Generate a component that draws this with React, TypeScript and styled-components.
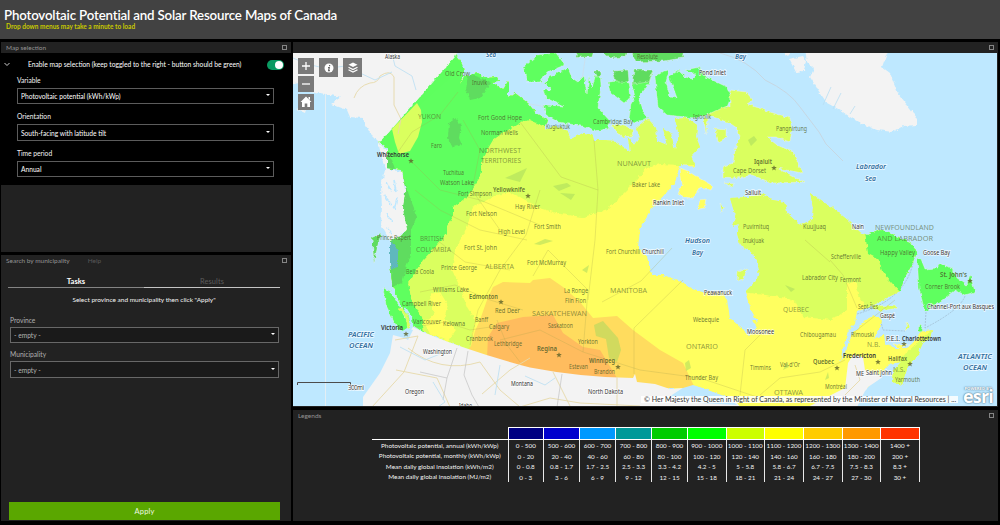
import React from 'react';
import styled, { createGlobalStyle } from 'styled-components';

const Global = createGlobalStyle`
  * { box-sizing: border-box; }
  body { margin: 0; background: #000; overflow: hidden; }
  #root { font-family: Lato, "Open Sans", sans-serif; }
`;

const Page = styled.div`
  width: 1000px;
  height: 525px;
  display: grid;
  grid-template-rows: 39px 479px 1fr;
  row-gap: 3px;
  background: #000;
  overflow: hidden;
`;

const Header = styled.header`
  background: #424242;
  padding: 7px 4px 0;
  white-space: nowrap;
`;

const Title = styled.h1`
  margin: 0;
  font-size: 13.3px;
  line-height: 16px;
  font-weight: 600;
  color: #fff;
  letter-spacing: -0.17px;
`;

const Subtitle = styled.div`
  padding-left: 2px;
  font-size: 6.5px;
  line-height: 8px;
  font-weight: 700;
  color: #c8c800;
`;

const Main = styled.main`
  display: grid;
  grid-template-columns: 290px 705px;
  column-gap: 2px;
  padding-left: 1px;
`;

const Column = styled.div<{ $rows: string }>`
  display: grid;
  grid-template-rows: ${(p) => p.$rows};
  row-gap: 3px;
  min-width: 0;
`;

const Panel = styled.section`
  display: flex;
  flex-direction: column;
  background: #222;
  min-width: 0;
  min-height: 0;
`;

const PanelBar = styled.div`
  flex: none;
  height: 11px;
  display: flex;
  align-items: center;
  padding: 0 4px 0 5px;
  font-size: 6.5px;
  color: #949494;
  white-space: nowrap;
`;

const Dim = styled.span`
  margin-left: 18px;
  color: #585858;
`;

const Maximize = styled.span`
  margin-left: auto;
  width: 5px;
  height: 5px;
  border: 1px solid #858585;
`;

const Form = styled.div`
  height: 132px;
  flex: none;
  background: #000;
  padding: 4px 7px 0 3px;
`;

const ToggleRow = styled.div`
  display: flex;
  align-items: center;
  height: 14px;
  font-size: 6.7px;
  color: #fff;
  white-space: nowrap;
`;

const ToggleText = styled.span`
  margin-left: 18px;
`;

const Toggle = styled.span`
  margin-left: auto;
  margin-top: 2px;
  width: 17px;
  height: 10px;
  border-radius: 5px;
  background: #0a9a62;
  display: flex;
  justify-content: flex-end;
  padding: 1px;
  &::after {
    content: '';
    width: 8px;
    height: 8px;
    border-radius: 50%;
    background: #fff;
  }
`;

const Fields = styled.div`
  padding: 0 10px 0 13px;
`;

const Label = styled.div<{ $dim?: boolean; $h: number }>`
  height: ${(p) => p.$h}px;
  display: flex;
  align-items: flex-end;
  padding-bottom: ${(p) => (p.$dim ? 2 : 3)}px;
  line-height: 9px;
  font-size: 6.7px;
  color: ${(p) => (p.$dim ? '#b0b0b0' : '#f4f4f4')};
`;

const Select = styled.div<{ $dim?: boolean }>`
  height: 16.4px;
  display: flex;
  align-items: center;
  padding: 0 3px;
  border: 1px solid ${(p) => (p.$dim ? '#686868' : '#5c5c5c')};
  background: ${(p) => (p.$dim ? '#1a1a1a' : '#000')};
  color: ${(p) => (p.$dim ? '#b4b4b4' : '#fff')};
  font-size: 6.65px;
  &::after {
    content: '';
    margin: -2px 0 0 auto;
    border: 2px solid transparent;
    border-top-color: #fff;
    border-bottom: 0;
  }
`;

const Search = styled.div`
  flex: 1;
  display: flex;
  flex-direction: column;
  padding: 7px 11px 0 7px;
`;

const Tabs = styled.div`
  display: grid;
  grid-template-columns: 1fr 1fr;
`;

const Tab = styled.div<{ $on?: boolean }>`
  height: 15px;
  line-height: 17px;
  text-align: center;
  border-bottom: 1px solid ${(p) => (p.$on ? '#848484' : '#c4c4c4')};
  font-size: ${(p) => (p.$on ? 7.6 : 7.4)}px;
  font-weight: ${(p) => (p.$on ? 700 : 400)};
  color: ${(p) => (p.$on ? '#fff' : '#5c5c5c')};
  letter-spacing: ${(p) => (p.$on ? 0 : 0.1)}px;
`;

const Hint = styled.p`
  margin: 0;
  height: 23px;
  line-height: 23px;
  text-align: center;
  font-size: 6.5px;
  color: #f4f4f4;
`;

const SearchFields = styled.div`
  padding: 0 1px 0 2px;
`;

const Apply = styled.button`
  margin: auto 0 1px 1px;
  height: 18px;
  flex: none;
  border: 0;
  background: #5aa700;
  color: #eef8e0;
  font: 7.5px Lato, sans-serif;
  letter-spacing: 0.15px;
`;

const MapFrame = styled.div`
  position: relative;
  height: 353px;
  overflow: hidden;
`;

const MapSvg = styled.svg`
  display: block;
  width: 704px;
  height: 353px;
`;

const Controls = styled.div`
  position: absolute;
  left: 5px;
  top: 5px;
  display: flex;
  gap: 5px;
`;

const Stack = styled.div`
  display: flex;
  flex-direction: column;
  gap: 2px;
`;

const Tool = styled.button<{ $s: number }>`
  width: ${(p) => p.$s}px;
  height: ${(p) => p.$s}px;
  padding: 0;
  border: 0;
  background: #7a7a7a;
  display: grid;
  place-items: center;
`;

const Attribution = styled.div`
  position: absolute;
  left: 348px;
  bottom: 3px;
  width: 317px;
  height: 7px;
  padding-left: 3px;
  background: rgba(255, 255, 255, 0.85);
  font-size: 7px;
  line-height: 7px;
  letter-spacing: 0.025px;
  color: #333;
  white-space: nowrap;
`;

const Powered = styled.div`
  position: absolute;
  right: 4px;
  bottom: 4px;
  width: 32px;
  color: #fff;
  font: 700 18px/11px "Open Sans", sans-serif;
  letter-spacing: -0.8px;
  text-shadow: 0 0 2px #55798e, 0 0 1px #55798e;
  text-align: center;
`;

const PoweredTop = styled.div`
  font-size: 4.2px;
  line-height: 5px;
  letter-spacing: 0;
`;

const LegendTable = styled.table`
  margin: 6px 0 0 79px;
  width: 548px;
  border-collapse: collapse;
  table-layout: fixed;
  color: #f4f4f4;
  font-size: 6.3px;
  text-align: center;
  white-space: nowrap;
`;

const Swatch = styled.th<{ $c: string }>`
  height: 12px;
  padding: 0;
  border: 1px solid #fff;
  background: ${(p) => p.$c};
`;

const Corner = styled.th`
  padding: 0;
  border-bottom: 1px solid #fff;
`;

const RowName = styled.td`
  padding: 0;
  font-size: 6.4px;
`;

const Cell = styled.td`
  padding: 1px 0 0;
  height: 10.7px;
  line-height: 9px;
  border-left: 1px solid #e8e8e8;
  border-right: 1px solid #e8e8e8;
`;

const FooterLine = styled.div`
  margin: 2px 0 0 262px;
  background: #3c3c3c;
  height: 1px;
`;

const LAND = '#f3f3f3';
const SEA = '#bee8ff';
const GREEN = '#5eff5e';
const DKGREEN = '#5edc5e';
const LIME = '#daff5e';
const YELLOW = '#ffff5e';
const AMBER = '#ffdc5e';
const ORANGE = '#ffbc5e';

const MAINLAND =
  '455,54 462,63 464,72 460,84 465,76 478,73 486,78 497,77 499,81 492,82 503,90 508,81 508,98 515,93 523,99 520,97 528,103 535,112 548,120 545,130 555,126 568,131 571,139 583,133 592,134 594,140 603,140 615,141 630,152 628,137 634,145 640,137 636,129 648,119 656,128 657,141 667,145 663,128 671,134 675,150 679,135 675,119 687,118 697,125 696,137 700,147 691,157 696,167 680,165 677,175 675,183 667,192 652,208 643,222 640,230 638,247 647,257 652,275 663,275 683,282 687,286 702,292 723,292 727,300 730,318 740,327 750,336 757,327 753,320 758,322 751,310 745,292 757,280 759,270 757,260 750,251 740,245 737,233 738,224 733,226 736,218 730,198 750,197 760,193 772,200 785,202 787,213 800,225 812,220 813,207 810,192 820,200 833,208 850,222 856,230 867,235 880,229 893,235 910,242 917,252 913,263 905,277 900,291 883,300 868,308 857,311 855,324 848,331 843,348 840,362 845,352 852,334 866,320 874,316 882,319 880,330 873,339 884,334 885,343 895,348 907,348 916,340 920,332 932,330 930,338 923,343 916,358 908,366 902,385 892,382 893,371 901,362 890,364 880,374 873,382 860,395 850,407 740,407 727,397 693,385 683,388 670,388 640,383 633,378 583,376 553,372 520,365 490,357 470,350 423,332 410,323 403,310 397,297 392,283 390,260 390,241 400,237 407,230 405,222 402,207 406,190 402,170 387,168 387,148 378,142';

const ISLES: [string, string][] = [
  ['523,67 530,61 537,55 556,53 565,65 547,72 540,82 527,82', GREEN],
  ['550,77 568,68 572,78 578,82 584,76 587,94 589,76 592,88 597,70 600,72 601,86 598,108 610,121 608,129 593,131 587,127 558,122 546,115 543,105 563,106 546,98 543,90 552,90 545,83', GREEN],
  ['608,82 628,80 630,98 624,103 610,92', GREEN],
  ['613,71 628,70 629,82 616,82', DKGREEN],
  ['594,71 601,71 601,76 597,77', DKGREEN],
  ['632,84 653,70 649,84 638,98 642,110 648,118 634,123 629,119 631,104 635,97', GREEN],
  ['634,70 653,70 649,82 632,84', DKGREEN],
  ['573,50 594,50 592,57 578,57', DKGREEN],
  ['600,50 627,50 625,57 610,58', DKGREEN],
  ['631,50 685,50 683,58 663,61 636,62', DKGREEN],
  ['655,77 664,71 669,70 666,82 670,97 677,98 669,76 678,70 685,77 692,79 696,75 685,70 700,67 706,77 727,87 731,97 727,107 707,115 695,118 667,115 658,107', GREEN],
  ['730,90 746,92 753,100 747,104 770,112 790,118 792,130 790,142 775,137 767,137 777,145 793,152 800,168 802,173 777,168 793,177 805,182 772,183 752,175 737,178 723,177 723,167 733,163 735,150 740,137 737,128 728,122 707,115 721,108 730,106', LIME],
  ['715,128 726,129 726,138 718,142', LIME],
  ['703,117 708,119 706,134', LIME],
  ['612,126 624,125 633,130 632,136 622,137', LIME],
  ['680,168 688,171 697,177 713,186 711,190 699,188 692,199 684,198 678,194 682,184', YELLOW],
  ['700,200 706,199 704,208 697,210', YELLOW],
  ['720,203 724,208 722,212', LIME],
  ['725,183 735,184 731,187', LIME],
  ['738,272 747,268 744,279 737,281', LIME],
  ['383,288 390,291 400,307 408,324 406,332 399,330 393,320 386,305', GREEN],
  ['372,238 381,234 377,248 374,264', DKGREEN],
  ['917,257 921,259 925,269 937,268 940,264 952,268 957,278 967,285 970,274 975,292 965,295 955,290 945,298 925,312 922,300 919,288', GREEN],
  ['870,306 896,305 898,308 880,311', LIME],
  ['892,343 898,345 910,345 899,348', YELLOW],
  ['907,322 910,326 905,331', LIME],
];

const ROADS = [
  'M395,340 L418,336 L404,372 L372,407', 'M408,348 Q440,374 480,362 L500,390 L520,407', 'M482,394 L510,370 L530,358',
  'M396,370 L437,378 L450,407', 'M553,372 L570,406', 'M617,377 L617,407', 'M520,407 L550,398 L580,403 L640,406',
];

const FAINT = [
  'M415,190 L440,210 L480,230 L527,240', 'M398,152 L412,132 L440,115 L458,92', 'M410,160 L440,190 L480,200 L540,225',
  'M470,345 L478,310 L500,270 L526,235 L540,190', 'M500,340 L540,330 L583,352 L640,370 L700,378 L760,398',
  'M523,310 L490,300 L455,285 L420,292', 'M497,320 L507,345 L520,362', 'M533,276 L548,250 L588,290 L583,352',
  'M602,302 L641,281 L672,248', 'M634,374 L634,328 L683,280', 'M594,140 L598,190 L595,240 L588,300',
  'M520,122 L561,177 L598,190', 'M463,120 L480,150 L472,190 L500,230', 'M845,360 L820,372 L780,378 L760,395',
  'M852,334 L895,300', 'M830,260 L843,275 L857,308', 'M805,240 L830,262', 'M437,240 L465,262 L510,270',
  'M415,327 L445,322 L470,330 L497,326', 'M740,395 L745,350 L760,335',
];

type Kind = 'city' | 'cap' | 'region' | 'sea' | 'out';
const LABELS: [string, number, number, number, Kind][] = [
  ['Alaska', 385, 59, 15, 'out'], ['Sea', 486, 57, 10, 'sea'], ['Old Crow', 445, 76, 25, 'city'], ['Inuvik', 472, 85, 15, 'city'],
  ['YUKON', 418, 119, 23, 'region'], ['Fort Good Hope', 478, 120, 44, 'city'], ['Norman Wells', 481, 135, 37, 'city'],
  ['Faro', 431, 148, 11, 'city'], ['Whitehorse', 377, 157, 32, 'cap'], ['NORTHWEST', 479, 153, 42, 'region'],
  ['TERRITORIES', 481, 163, 40, 'region'], ['Tuchitua', 443, 175, 21, 'city'], ['Watson Lake', 440, 185, 34, 'city'],
  ['Fort Simpson', 458, 196, 34, 'city'], ['Yellowknife', 493, 192, 32, 'cap'], ['Hay River', 515, 209, 25, 'city'],
  ['Fort Nelson', 466, 216, 31, 'city'], ['Resolute', 637, 59, 21, 'city'], ['Bay', 735, 59, 11, 'sea'], ['Pond Inlet', 699, 75, 27, 'out'],
  ['Igloolik', 693, 119, 18, 'city'], ['Cambridge Bay', 593, 124, 40, 'city'], ['Kugluktuk', 546, 129, 24, 'city'],
  ['NUNAVUT', 617, 166, 34, 'region'], ['Baker Lake', 632, 187, 28, 'city'], ['Rankin Inlet', 653, 205, 31, 'out'],
  ['Fort Smith', 534, 229, 27, 'city'], ['Cape Dorset', 733, 173, 33, 'city'], ['Salluit', 745, 195, 16, 'out'],
  ['Pangnirtung', 776, 131, 31, 'city'], ['Iqaluit', 754, 164, 18, 'cap'], ['Labrador', 856, 169, 30, 'sea'], ['Sea', 865, 181, 11, 'sea'],
  ['Puvirnituq', 743, 229, 26, 'city'], ['Kuujjuaq', 803, 229, 23, 'city'], ['Nain', 852, 229, 12, 'out'], ['NEWFOUNDLAND', 875, 230, 59, 'region'],
  ['AND LABRADOR', 877, 241, 56, 'region'], ['Inukjuak', 743, 243, 21, 'city'], ['Schefferville', 831, 259, 30, 'city'],
  ['Happy Valley', 880, 255, 35, 'city'], ['Goose Bay', 923, 255, 27, 'out'], ['Labrador City', 802, 280, 36, 'city'],
  ['Fermont', 840, 282, 21, 'city'], ["St. John's", 940, 277, 27, 'cap'], ['Corner Brook', 925, 289, 35, 'city'],
  ['QUEBEC', 783, 312, 26, 'region'], ['Sept-Îles', 858, 309, 20, 'city'], ['Channel-Port aux Basques', 927, 309, 67, 'out'],
  ['Gaspé', 880, 318, 15, 'out'], ['Moosonee', 747, 334, 27, 'out'], ['Chibougamau', 800, 337, 36, 'city'], ['Rimouski', 851, 337, 23, 'city'],
  ['P.E.I.', 886, 341, 14, 'out'], ['Charlottetown', 902, 341, 39, 'cap'], ['N.B.', 867, 347, 13, 'region'], ['Fredericton', 843, 358, 33, 'cap'],
  ['Quebec', 813, 364, 21, 'cap'], ["Val-d'Or", 780, 367, 20, 'city'], ['Halifax', 888, 361, 19, 'cap'], ['Saint John', 866, 375, 26, 'out'],
  ['ME', 856, 376, 8, 'out'], ['N.S.', 893, 372, 12, 'region'], ['Yarmouth', 895, 382, 25, 'city'], ['Montréal', 825, 389, 22, 'city'], ['OTTAWA', 774, 395, 29, 'region'],
  ['Timmins', 750, 370, 21, 'city'], ['ATLANTIC', 958, 359, 34, 'sea'], ['OCEAN', 963, 370, 24, 'sea'], ['Hudson', 685, 243, 25, 'sea'], ['Bay', 692, 255, 11, 'sea'],
  ['Fort Churchill', 606, 254, 34, 'city'], ['Churchill', 642, 254, 22, 'out'], ['Fort McMurray', 527, 265, 39, 'city'],
  ['Peawanuck', 704, 295, 28, 'out'], ['MANITOBA', 610, 293, 37, 'region'], ['La Ronge', 564, 293, 24, 'city'], ['Flin Flon', 565, 303, 21, 'city'],
  ['SASKATCHEWAN', 532, 316, 55, 'region'], ['Saskatoon', 548, 328, 25, 'city'], ['Webequie', 693, 322, 26, 'city'], ['Yorkton', 578, 344, 20, 'city'],
  ['ONTARIO', 686, 349, 32, 'region'], ['Regina', 537, 351, 20, 'cap'], ['Winnipeg', 589, 363, 26, 'cap'], ['Estevan', 569, 369, 19, 'city'],
  ['Brandon', 594, 374, 21, 'city'], ['Thunder Bay', 685, 380, 33, 'city'], ['North Dakota', 588, 394, 35, 'out'], ['Montana', 511, 386, 22, 'out'],
  ['Prince Rupert', 377, 240, 34, 'city'], ['BRITISH', 420, 241, 24, 'region'], ['COLUMBIA', 416, 252, 35, 'region'], ['High Level', 498, 234, 27, 'city'],
  ['Fort St. John', 464, 250, 33, 'city'], ['ALBERTA', 485, 269, 29, 'region'], ['Prince George', 441, 270, 36, 'city'], ['Bella Coola', 406, 274, 28, 'city'],
  ['Williams Lake', 433, 292, 36, 'city'], ['Edmonton', 469, 299, 29, 'cap'], ['Campbell River', 402, 306, 39, 'city'], ['Red Deer', 495, 313, 25, 'city'],
  ['Vancouver', 413, 324, 28, 'city'], ['Kelowna', 443, 326, 22, 'city'], ['Banff', 475, 322, 13, 'city'], ['Calgary', 489, 329, 20, 'city'],
  ['Victoria', 381, 330, 22, 'cap'], ['Cranbrook', 466, 341, 27, 'city'], ['Lethbridge', 494, 346, 28, 'city'], ['PACIFIC', 348, 337, 26, 'sea'],
  ['OCEAN', 349, 348, 24, 'sea'], ['Washington', 423, 354, 29, 'out'], ['Oregon', 405, 394, 19, 'out'], ['Idaho', 459, 408, 13, 'out'],
];

const STARS: [number, number][] = [
  [411, 161], [528, 196], [774, 168], [501, 302], [406, 334], [559, 355], [618, 367], [837, 368], [904, 344], [878, 362], [910, 364], [970, 281],
];

const DARK_ON_WATER = ['Whitehorse', 'Victoria', 'Charlottetown', 'Fredericton'];

const MapText = styled.text<{ $k: Kind; $dark: boolean }>`
  font-family: 'Noto Sans', sans-serif;
  font-size: ${(p) => (p.$k === 'region' ? 7.6 : p.$k === 'sea' ? 7.4 : 6.4)}px;
  font-weight: ${(p) => (p.$k === 'sea' || p.$k === 'cap' ? 600 : 400)};
  font-style: ${(p) => (p.$k === 'sea' ? 'italic' : 'normal')};
  fill: ${(p) => (p.$k === 'sea' ? '#2f6f9f' : p.$k === 'out' || p.$dark ? '#333' : '#4b5a28')};
  fill-opacity: ${(p) => (p.$k === 'region' ? 0.62 : p.$k === 'city' ? 0.82 : p.$k === 'cap' && !p.$dark ? 0.85 : 1)};
  stroke: ${(p) => (p.$k === 'out' || p.$k === 'sea' ? '#fff' : 'none')};
  stroke-opacity: 0.8;
  stroke-width: 1.4px;
  paint-order: stroke;
`;

function CanadaMap() {
  return (
    <MapSvg viewBox="293 53 704 353">
      <defs>
        <filter id="coast" x="293" y="45" width="710" height="370" filterUnits="userSpaceOnUse">
          <feTurbulence type="fractalNoise" baseFrequency="0.25" numOctaves="3" seed="4" />
          <feDisplacementMap in="SourceGraphic" scale="4" xChannelSelector="R" yChannelSelector="G" />
        </filter>
        <clipPath id="land"><polygon points={MAINLAND} /></clipPath>
      </defs>
      <rect x="293" y="53" width="704" height="353" fill={SEA} />
      <g fill="none" stroke="#d3dce2" strokeWidth="1">
        <path d="M325.5,53 V406" stroke="#e3eef4" />
        <path d="M720,53 Q748,60 765,80 Q790,92 800,107 L819,132 L826,144 L843,161" strokeWidth="0.8" stroke="#c8d2da" />
        <path d="M586,53 L582,80 L575,112 L530,104" strokeWidth="0.6" />
        <path d="M913,263 Q905,300 857,314 M926,312 L925,328 Q960,310 965,296 M880,318 L883,330 L905,331" stroke="#9db7cc" strokeWidth="0.7" strokeDasharray="2 1" />
      </g>
      <g filter="url(#coast)">
        <g clipPath="url(#land)">
          <rect x="293" y="45" width="704" height="370" fill={YELLOW} />
          <polygon fill={LIME} points="370,40 720,40 700,165 680,165 660,164 647,168 630,187 607,210 583,217 560,214 540,208 520,197 510,192 497,195 473,207 467,227 455,250 452,270 460,287 467,307 475,320 470,352 420,340 370,300" />
          <polygon fill={YELLOW} points="430,295 440,292 448,305 444,318 456,330 448,341 430,334 424,322 434,315" />
          <polygon fill={GREEN} points="370,40 560,40 560,122 548,128 529,120 520,123 507,130 493,140 483,157 480,177 467,197 453,207 453,217 447,226 447,233 437,245 423,260 408,283 412,303 422,317 424,334 370,330" />
          <polygon fill={DKGREEN} points="468,74 484,79 491,83 480,98 470,100 466,90" />
          <polygon fill={DKGREEN} points="449,123 456,118 461,126 459,138 462,145 453,147 448,138" />
          <polygon fill={DKGREEN} points="386,152 391,158 395,169 386,170" />
          <polygon fill={DKGREEN} points="402,172 409,195 417,216 411,230 411,250 402,283 389,288 385,230 400,225" />
          <polygon fill="#5eb8bd" points="392,241 398,250 398,267 391,269 386,255" />
          <polygon fill={LIME} points="725,185 920,185 920,285 900,293 868,310 858,295 857,282 847,283 847,310 832,320 803,317 795,302 787,298 750,293 720,290" />
          <polygon fill={GREEN} points="864,225 925,225 925,290 900,292 883,273 878,258 868,253" />
          <polygon fill={LIME} points="895,365 907,352 938,325 938,350 905,392 885,387" />
        </g>
        <g stroke={LAND} strokeWidth="0.4">
          {ISLES.map(([points, fill]) => <polygon key={points} points={points} fill={fill} />)}
          <polygon points="919,324 923,328 922,333 918,331" fill={GREEN} />
          <path d="M400,308 L407,316 L409,329" stroke={LIME} strokeWidth="3" fill="none" />
        </g>
        <path d="M405,308 L410,316 L412,325" stroke={SEA} strokeWidth="2.5" fill="none" />
        <polygon fill={LAND} points="378,142 387,151 387,169 402,172 405,190 403,209 407,229 400,236 390,241 381,225 382,208 381,186 385,170" />
        <path d="M386,182 l5,10 M384,195 l7,9 M386,213 l6,8 M394,180 l2,12 M397,198 l-3,12 M388,228 l4,6" stroke={SEA} strokeWidth="1.6" />
        <polygon fill={LAND} points="290,48 458,48 455,57 380,143 370,133 362,118 350,117 347,110 331,104 341,97 320,93 309,94 306,118 290,118" />
        <polygon fill={SEA} points="288,85 299,83 302,91 316,93 311,102 309,122 288,122" />
        <polygon fill={LAND} points="296,109 307,106 305,113" />
        <polygon fill={LAND} points="805,48 889,48 882,67 890,73 898,93 917,118 917,125 903,126 893,132 877,130 860,123 850,117 840,110 827,103 820,93 810,77 814,69 807,62" />
        <polygon fill={LAND} points="789,59 803,56 806,61 804,71 796,72" />
        <polygon fill={LAND} points="779,50 793,50 788,56" />
      </g>
      <polygon fill={GREEN} points="455.5,57 380.5,142 390,150 402,133 418,106 463,66" />
      <polygon fill={LIME} points="417,103 421,110 422,122 418,137 410,151 399,154 395,142 392,129" />
      <polygon fill={AMBER} points="467,351 471,346 475,331 480,320 487,300 493,287 503,282 530,283 533,280 550,278 563,287 580,302 593,318 617,316 633,330 660,350 683,363 695,388 640,388 610,380 540,372" />
      <polygon fill={ORANGE} points="487,358 488,337 497,323 523,317 553,315 563,333 583,347 600,350 617,378 570,377 520,367" />
      <path fill={LAND} d="M423,332 Q468,351 530,367.500 Q582,377.500 633,378 L635,374 L637,382 L655,384 L670,389 L683,388 L672,395 L690,400 L735,400 L740,407 H363 V397 L380,373 L390,353 L393,335 L404,338 L413,327 Z" />
      <path fill={SEA} d="M683,388 L693,385 L727,397 L737,405 L700,403 L680,396 L668,398 Z M398,334 L408,340 L413,330 L407,328 Z" />
      <polygon fill={LAND} points="848,363 853,355 863,357 865,370 883,377 868,387 861,400 858,407 808,407 833,394 845,388" />
      <polygon fill={SEA} points="865,391 884,376 894,384 890,407 857,407" />
      <g fill="none" stroke="#e6d9a9" strokeWidth="0.9">
        {ROADS.map((d) => <path key={d} d={d} />)}
        <path d="M354,98 Q358,86 370,83 Q378,83 380,76 Q390,69 394,77 L394,105 L401,119 L398,134" />
        <path d="M845,395 L860,380 L855,365" />
      </g>
      <g fill="none" stroke="#c3c3c3" strokeWidth="0.7">
        <path d="M457,348 L447,378 L420,372 M447,378 L443,400 M468,351 L464,375 L472,395 L479,407 M562,374 L557,407" />
      </g>
      <g fill="none" stroke="#b9def2" strokeWidth="0.8">
        <path d="M293,58 Q320,72 345,66 L375,80 L392,72 M392,54 L395,66 L412,76 L416,90 M400,347 L425,360 L450,350 M433,382 L445,402 L438,407 M500,365 L495,395 M525,376 L545,385 L555,378 M823,105 l8,-18 M833,109 l8,-16 M850,114 l5,-8" />
      </g>
      <g fill="none" stroke="#a8a54e" strokeOpacity="0.38" strokeWidth="0.7">
        {FAINT.map((d) => <path key={d} d={d} />)}
      </g>
      <g fill="#a4d85e" fillOpacity="0.5">
        <path d="M594,325 L603,321 L618,338 L621,350 L617,362 L609,358 L606,339 L596,336 Z" />
        <path d="M553,186 l14,-3 l4,3 l-12,5 Z M534,244 l11,-5 l8,2 l-13,4 Z M685,363 l4,-3 l2,8 l-5,3 Z M748,140 l6,-4 l3,4 l-6,6 Z M505,178 l22,-10 l-7,14 Z M582,270 l7,-5 l-2,8 Z M560,193 l15,1 l-4,6 Z M785,285 l10,4 l-4,3 Z M783,370 l4,-8 l2,5 Z M825,380 l3,-8 l1,6 Z" />
      </g>
      {LABELS.map(([text, x, y, w, kind]) => (
        <MapText key={`${text}${x}`} x={x} y={y} textLength={w} lengthAdjust="spacingAndGlyphs" $k={kind} $dark={DARK_ON_WATER.includes(text)}>
          {text}
        </MapText>
      ))}
      <g fill="#5d6228" fillOpacity="0.8">
        {STARS.map(([x, y]) => (
          <path key={x} d={`M${x},${y - 2.8} l0.8,1.9 h2 l-1.6,1.3 l0.6,2 l-1.8,-1.2 l-1.8,1.2 l0.6,-2 l-1.6,-1.3 h2 Z`} />
        ))}
      </g>
      <path d="M297.5,385 V382.5 H350.5 V385" fill="none" stroke="#4c4c4c" strokeWidth="1" />
      <MapText x={348} y={390} textLength={16} $k="out" $dark>300mi</MapText>
    </MapSvg>
  );
}

const COLORS = ['#000082', '#0000cd', '#0099ff', '#009999', '#00cc00', '#00ff00', '#ccff00', '#ffff00', '#ffcc00', '#ff9900', '#ff3300'];
const WIDTHS = [136, 35.5, 36, 36, 36, 36, 38.5, 38.5, 39, 38.5, 38.5, 39];
const ROWS = [
  ['Photovoltaic potential, annual (kWh/kWp)', '0 - 500', '500 - 600', '600 - 700', '700 - 800', '800 - 900', '900 - 1000', '1000 - 1100', '1100 - 1200', '1200 - 1300', '1300 - 1400', '1400 +'],
  ['Photovoltaic potential, monthly (kWh/kWp)', '0 - 20', '20 - 40', '40 - 60', '60 - 80', '80 - 100', '100 - 120', '120 - 140', '140 - 160', '160 - 180', '180 - 200', '200 +'],
  ['Mean daily global insolation (kWh/m2)', '0 - 0.8', '0.8 - 1.7', '1.7 - 2.5', '2.5 - 3.3', '3.3 - 4.2', '4.2 - 5', '5 - 5.8', '5.8 - 6.7', '6.7 - 7.5', '7.5 - 8.3', '8.3 +'],
  ['Mean daily global insolation  (MJ/m2)', '0 - 3', '3 - 6', '6 - 9', '9 - 12', '12 - 15', '15 - 18', '18 - 21', '21 - 24', '24 - 27', '27 - 30', '30 +'],
];

export default function App() {
  return (
    <Page>
      <Global />
      <Header>
        <Title>Photovoltaic Potential and Solar Resource Maps of Canada</Title>
        <Subtitle>Drop down menus may take a minute to load</Subtitle>
      </Header>
      <Main>
        <Column $rows="210px 1fr">
          <Panel>
            <PanelBar>Map selection<Maximize /></PanelBar>
            <Form>
              <ToggleRow>
                <svg width="6" height="5" viewBox="0 0 6 5"><path d="M0.5,1 L3,3.5 L5.5,1" fill="none" stroke="#ccc" /></svg>
                <ToggleText>Enable map selection (keep toggled to the right - button should be green)</ToggleText>
                <Toggle />
              </ToggleRow>
              <Fields>
                <Label $h={17}>Variable</Label>
                <Select>Photovoltaic potential (kWh/kWp)</Select>
                <Label $h={20}>Orientation</Label>
                <Select>South-facing with latitude tilt</Select>
                <Label $h={20}>Time period</Label>
                <Select>Annual</Select>
              </Fields>
            </Form>
          </Panel>
          <Panel>
            <PanelBar>Search by municipality<Dim>Help</Dim><Maximize /></PanelBar>
            <Search>
              <Tabs><Tab $on>Tasks</Tab><Tab>Results</Tab></Tabs>
              <Hint>Select province and municipality then click "Apply"</Hint>
              <SearchFields>
                <Label $dim $h={16}>Province</Label>
                <Select $dim>- empty -</Select>
                <Label $dim $h={18}>Municipality</Label>
                <Select $dim>- empty -</Select>
              </SearchFields>
              <Apply>Apply</Apply>
            </Search>
          </Panel>
        </Column>
        <Column $rows="365px 1fr">
          <Panel>
            <PanelBar><Maximize /></PanelBar>
            <MapFrame>
              <CanadaMap />
              <Controls>
                <Stack>
                  <Tool $s={16}><svg width="10" height="10"><path d="M5,1 V9 M1,5 H9" stroke="#fff" strokeWidth="1.3" /></svg></Tool>
                  <Tool $s={16}><svg width="10" height="10"><path d="M1,5 H9" stroke="#fff" strokeWidth="1.3" /></svg></Tool>
                  <Tool $s={16}><svg width="12" height="12"><path d="M6,0.5 L11.5,6 H10 V11 H7.3 V7.5 H4.7 V11 H2 V6 H0.5 Z M8.5,1 H10 V4 L8.5,2.5 Z" fill="#fff" /></svg></Tool>
                </Stack>
                <Tool $s={19}><svg width="10" height="10"><circle cx="5" cy="5" r="4.5" fill="#fff" /><path d="M5.6,2 v1.3 M4,4.5 h1.3 L4.6,7.6 h1.3" stroke="#666" strokeWidth="1.2" fill="none" /></svg></Tool>
                <Tool $s={19}><svg width="10" height="11"><path d="M5,0.5 L9.5,2.8 L5,5.1 L0.5,2.8 Z" fill="#fff" /><path d="M0.5,5.2 L5,7.5 L9.5,5.2 M0.5,7.7 L5,10 L9.5,7.7" stroke="#fff" strokeWidth="1.2" fill="none" /></svg></Tool>
              </Controls>
              <Attribution>© Her Majesty the Queen in Right of Canada, as represented by the Minister of Natural Resources | ...</Attribution>
              <Powered><PoweredTop>POWERED BY</PoweredTop>esri</Powered>
            </MapFrame>
          </Panel>
          <Panel>
            <PanelBar>Legends<Maximize /></PanelBar>
            <LegendTable>
              <colgroup>{WIDTHS.map((w, i) => <col key={i} width={w} />)}</colgroup>
              <thead>
                <tr><Corner />{COLORS.map((c) => <Swatch key={c} $c={c} />)}</tr>
              </thead>
              <tbody>
                {ROWS.map(([name, ...values]) => (
                  <tr key={name}>
                    <RowName>{name}</RowName>
                    {values.map((v) => <Cell key={v}>{v}</Cell>)}
                  </tr>
                ))}
              </tbody>
            </LegendTable>
          </Panel>
        </Column>
      </Main>
      <FooterLine />
    </Page>
  );
}
